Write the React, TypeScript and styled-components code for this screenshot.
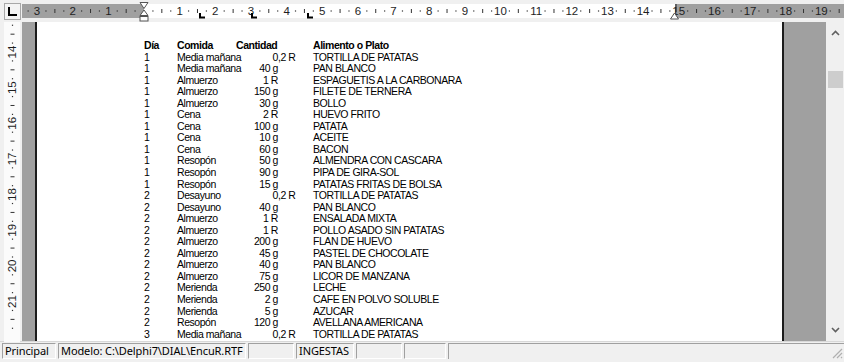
import * as React from 'react';
import styled, { createGlobalStyle } from 'styled-components';

const CM = 35.65;
const ORIGIN_X = 144;
const ORIGIN_Y = 52 - 14 * CM;

interface Entry {
  dia: string
  comida: string
  entero: string
  fraccion?: string
  alimento: string
}

const entries: Entry[] = [
  { dia: '1', comida: 'Media mañana', entero: '0', fraccion: ',2 R', alimento: 'TORTILLA DE PATATAS' },
  { dia: '1', comida: 'Media mañana', entero: '40 g', alimento: 'PAN BLANCO' },
  { dia: '1', comida: 'Almuerzo', entero: '1 R', alimento: 'ESPAGUETIS A LA CARBONARA' },
  { dia: '1', comida: 'Almuerzo', entero: '150 g', alimento: 'FILETE DE TERNERA' },
  { dia: '1', comida: 'Almuerzo', entero: '30 g', alimento: 'BOLLO' },
  { dia: '1', comida: 'Cena', entero: '2 R', alimento: 'HUEVO FRITO' },
  { dia: '1', comida: 'Cena', entero: '100 g', alimento: 'PATATA' },
  { dia: '1', comida: 'Cena', entero: '10 g', alimento: 'ACEITE' },
  { dia: '1', comida: 'Cena', entero: '60 g', alimento: 'BACON' },
  { dia: '1', comida: 'Resopón', entero: '50 g', alimento: 'ALMENDRA CON CASCARA' },
  { dia: '1', comida: 'Resopón', entero: '90 g', alimento: 'PIPA DE GIRA-SOL' },
  { dia: '1', comida: 'Resopón', entero: '15 g', alimento: 'PATATAS FRITAS DE BOLSA' },
  { dia: '2', comida: 'Desayuno', entero: '0', fraccion: ',2 R', alimento: 'TORTILLA DE PATATAS' },
  { dia: '2', comida: 'Desayuno', entero: '40 g', alimento: 'PAN BLANCO' },
  { dia: '2', comida: 'Almuerzo', entero: '1 R', alimento: 'ENSALADA MIXTA' },
  { dia: '2', comida: 'Almuerzo', entero: '1 R', alimento: 'POLLO ASADO SIN PATATAS' },
  { dia: '2', comida: 'Almuerzo', entero: '200 g', alimento: 'FLAN DE HUEVO' },
  { dia: '2', comida: 'Almuerzo', entero: '45 g', alimento: 'PASTEL DE CHOCOLATE' },
  { dia: '2', comida: 'Almuerzo', entero: '40 g', alimento: 'PAN BLANCO' },
  { dia: '2', comida: 'Almuerzo', entero: '75 g', alimento: 'LICOR DE MANZANA' },
  { dia: '2', comida: 'Merienda', entero: '250 g', alimento: 'LECHE' },
  { dia: '2', comida: 'Merienda', entero: '2 g', alimento: 'CAFE EN POLVO SOLUBLE' },
  { dia: '2', comida: 'Merienda', entero: '5 g', alimento: 'AZUCAR' },
  { dia: '2', comida: 'Resopón', entero: '120 g', alimento: 'AVELLANA AMERICANA' },
  { dia: '3', comida: 'Media mañana', entero: '0', fraccion: ',2 R', alimento: 'TORTILLA DE PATATAS' },
];

const panels = [
  { width: 54, text: 'Principal' },
  { width: 188, text: 'Modelo: C:\\Delphi7\\DIAL\\EncuR.RTF' },
  { width: 46, text: '' },
  { width: 58, text: 'INGESTAS' },
  { width: 46, text: '' },
  { width: 42, text: '' },
];

function quarterSteps(from: number, to: number) {
  const steps: number[] = [];
  for (let q = from * 4; q <= to * 4; q++) steps.push(q / 4);
  return steps;
}

function HorizontalRuler() {
  const off = 22;
  const x = (cm: number) => ORIGIN_X + cm * CM - off;
  return (
    <svg width={822} height={22}>
      <rect x={0} y={4} width={122} height={14} fill="#a0a0a0" />
      <rect x={122} y={4} width={531} height={14} fill="#ffffff" />
      <rect x={653} y={4} width={169} height={14} fill="#a0a0a0" />
      {quarterSteps(-3.5, 19.75).map((cm) => {
        const px = x(cm);
        if (Number.isInteger(cm)) {
          if (cm === 0) return null;
          return (
            <text key={cm} x={px} y={15} textAnchor="middle" fontSize={11.5}
              fontFamily="'Liberation Sans', Arial, sans-serif" fill="#1e1e1e">
              {Math.abs(cm)}
            </text>
          );
        }
        if (Math.abs(cm % 1) === 0.5) {
          return <rect key={cm} x={px - 0.5} y={9} width={1} height={4} fill="#333" />;
        }
        return <rect key={cm} x={px - 0.6} y={10.4} width={1.2} height={1.2} fill="#333" />;
      })}
      {[200, 252, 308].map((t) => (
        <path key={t} d={`M${t - off} 13 V17.5 H${t - off + 5}`} stroke="#000" strokeWidth={2} fill="none" />
      ))}
      <line x1={678 - off - 2} y1={4} x2={678 - off - 2} y2={12} stroke="#222" strokeWidth={1} />
      <path d={`M${122 - 4} 2.5 H${122 + 4} L${122} 8.5 Z`} fill="#fff" stroke="#555" />
      <path d={`M${122} 10 L${122 + 4} 15.5 H${122 - 4} Z`} fill="#fff" stroke="#555" />
      <rect x={122 - 4} y={16.5} width={8} height={4.5} fill="#fff" stroke="#555" />
      <path d={`M${653 - 0.5} 13 L${653 + 3.5} 19 H${653 - 4.5} Z`} fill="#fff" stroke="#555" />
    </svg>
  );
}

function VerticalRuler() {
  const y = (cm: number) => ORIGIN_Y + cm * CM - 22;
  return (
    <svg width={22} height={320}>
      <rect x={4} y={0} width={16} height={320} fill="#fbfbfb" />
      {quarterSteps(13.25, 21.75).map((cm) => {
        const py = y(cm);
        if (Number.isInteger(cm)) {
          return (
            <text key={cm} x={0} y={0} textAnchor="middle" fontSize={11.5}
              fontFamily="'Liberation Sans', Arial, sans-serif" fill="#1e1e1e"
              transform={`translate(16 ${py}) rotate(-90)`}>
              {cm}
            </text>
          );
        }
        if (cm % 1 === 0.5) {
          return <rect key={cm} x={10.5} y={py - 0.5} width={4} height={1} fill="#333" />;
        }
        return <rect key={cm} x={11.9} y={py - 0.6} width={1.2} height={1.2} fill="#333" />;
      })}
    </svg>
  );
}

function Chevron({ up }: { up?: boolean }) {
  return (
    <svg width={9} height={6}>
      <path d={up ? 'M1 5 L4.5 1.5 L8 5' : 'M1 1 L4.5 4.5 L8 1'} stroke="#606060" strokeWidth={1.6} fill="none" />
    </svg>
  );
}

export default function App() {
  return (
    <Window>
      <GlobalStyle />
      <TopBar>
        <TabBox><TabGlyph /></TabBox>
        <HorizontalRuler />
      </TopBar>
      <Body>
        <SideRuler><VerticalRuler /></SideRuler>
        <Editor>
          <Margin width={13} />
          <PageEdge />
          <Page>
            <Line>
              <Head>Día</Head>
              <Head>Comida</Head>
              <Head wide>Cantidad</Head>
              <Head>Alimento o Plato</Head>
            </Line>
            {entries.map((e, i) => (
              <Line key={`${e.alimento}_${i}`}>
                <Cell>{e.dia}</Cell>
                <Cell>{e.comida}</Cell>
                <Amount>{e.entero}</Amount>
                <Cell>{e.fraccion}</Cell>
                <Cell>{e.alimento}</Cell>
              </Line>
            ))}
          </Page>
          <PageEdge />
          <Margin width={42} />
        </Editor>
        <Scrollbar>
          <Arrow><Chevron up /></Arrow>
          <Track>
            <Thumb />
          </Track>
          <Arrow><Chevron /></Arrow>
        </Scrollbar>
      </Body>
      <StatusBar>
        {panels.map((p, i) => (
          <Panel key={i} width={p.width}>{p.text}</Panel>
        ))}
        <LastPanel>
          <svg width={12} height={12}>
            <path d="M11 2 L2 11 M11 6 L6 11 M11 10 L10 11" stroke="#b0b0b0" strokeWidth={1.2} />
          </svg>
        </LastPanel>
      </StatusBar>
    </Window>
  );
}

const GlobalStyle = createGlobalStyle`
  html, body {
    margin: 0;
    padding: 0;
    background: #f0f0f0;
  }
  * { box-sizing: border-box; }
`;

const Window = styled.div`
  width: 844px;
  height: 362px;
  display: flex;
  flex-direction: column;
  background: #f0f0f0;
  overflow: hidden;
`;

const TopBar = styled.div`
  height: 22px;
  display: flex;
  align-items: flex-start;
`;

const TabBox = styled.div`
  width: 17px;
  height: 17px;
  margin: 3px 1px 0 4px;
  border: 1px solid #a8a8a8;
  background: #f4f4f4;
  position: relative;
`;

const TabGlyph = styled.div`
  position: absolute;
  left: 3px;
  top: 3px;
  width: 9px;
  height: 9px;
  border-left: 2px solid #000;
  border-bottom: 2px solid #000;
`;

const Body = styled.div`
  height: 320px;
  display: flex;
  border-bottom: 1px solid #d8d8d8;
`;

const SideRuler = styled.div`
  width: 22px;
  flex: none;
  display: flex;
`;

const Editor = styled.div`
  flex: 1;
  display: flex;
`;

const Margin = styled.div<{ width: number }>`
  width: ${(p) => p.width}px;
  flex: none;
  background: #a0a0a0;
`;

const PageEdge = styled.div`
  width: 2px;
  flex: none;
  background: #1c1c1c;
`;

const Page = styled.div`
  flex: 1;
  background: #fff;
  padding: 18px 0 0 107px;
  font-family: 'Liberation Sans', Arial, sans-serif;
  font-size: 10.5px;
  letter-spacing: -0.45px;
  color: #000;
  overflow: hidden;
`;

const Line = styled.div`
  display: grid;
  grid-template-columns: 33px 59px 42px 35px 1fr;
  height: 11.56px;
  line-height: 11.56px;
  white-space: nowrap;
`;

const Head = styled.div<{ wide?: boolean }>`
  font-weight: bold;
  grid-column: ${(p) => (p.wide ? 'span 2' : 'auto')};
`;

const Cell = styled.div``;

const Amount = styled.div`
  text-align: right;
`;

const Scrollbar = styled.div`
  width: 18px;
  flex: none;
  display: flex;
  flex-direction: column;
  background: #f0f0f0;
`;

const Arrow = styled.div`
  height: 22px;
  display: flex;
  align-items: center;
  justify-content: center;
  padding-left: 1px;
`;

const Track = styled.div`
  flex: 1;
  padding: 27px 1px 0 2px;
`;

const Thumb = styled.div`
  height: 17px;
  background: #cdcdcd;
`;

const StatusBar = styled.div`
  flex: 1;
  display: flex;
  gap: 2px;
  padding: 1px 0 3px 2px;
  font-family: 'Noto Sans', 'Open Sans', sans-serif;
  font-size: 11px;
  letter-spacing: -0.1px;
  color: #000;
`;

const Panel = styled.div<{ width: number }>`
  width: ${(p) => p.width}px;
  flex: none;
  border-top: 1px solid #a0a0a0;
  border-left: 1px solid #a0a0a0;
  border-right: 1px solid #fff;
  border-bottom: 1px solid #fff;
  padding: 0 2px;
  line-height: 14px;
  white-space: nowrap;
  overflow: hidden;
`;

const LastPanel = styled.div`
  flex: 1;
  border-top: 1px solid #a0a0a0;
  border-left: 1px solid #a0a0a0;
  display: flex;
  justify-content: flex-end;
  align-items: flex-end;
  padding: 0 1px 0 0;
`;
